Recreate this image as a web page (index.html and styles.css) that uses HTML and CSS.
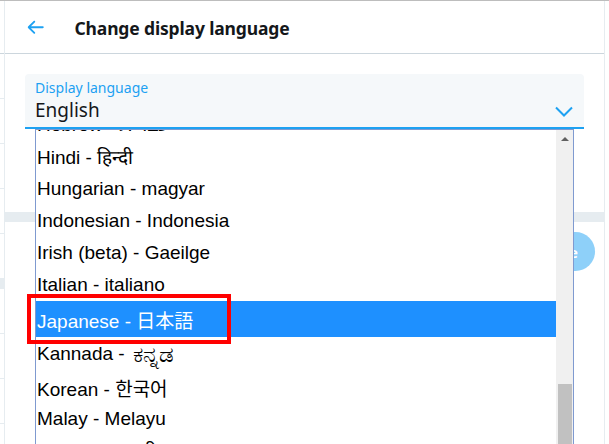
FILE: index.html
```html
<!DOCTYPE html>
<html lang="en">
<head>
<meta charset="utf-8">
<title>Change display language</title>
<link rel="stylesheet" href="styles.css">
</head>
<body>
<div class="screen">
  <aside class="side-left">
    <div class="side-row side-row-first"></div>
    <div class="side-row"></div>
    <div class="side-row"></div>
    <div class="side-row"></div>
    <div class="side-row"></div>
    <div class="side-row"></div>
    <div class="side-band"></div>
    <div class="side-row"></div>
    <div class="side-row"></div>
    <div class="side-row"></div>
  </aside>

  <main class="main">
    <header class="header">
      <svg class="back" viewBox="0 0 24 24" aria-hidden="true"><path d="M20 11H7.414l4.293-4.293c.39-.39.39-1.023 0-1.414s-1.023-.39-1.414 0l-6 6c-.39.39-.39 1.023 0 1.414l6 6c.195.195.45.293.707.293s.512-.098.707-.293c.39-.39.39-1.023 0-1.414L7.414 13H20c.553 0 1-.447 1-1s-.447-1-1-1z"/></svg>
      <h1 class="title">Change display language</h1>
    </header>

    <section class="content">
      <div class="field">
        <div class="field-text">
          <div class="field-label">Display language</div>
          <div class="field-value">English</div>
        </div>
        <svg class="chevron" viewBox="0 0 18 11" aria-hidden="true"><polyline points="1,1.5 9,9.5 17,1.5"/></svg>
      </div>
    </section>

    <div class="band"></div>

    <div class="actions">
      <button class="save" type="button">Save</button>
    </div>
  </main>

  <aside class="side-right"></aside>

  <div class="dropdown">
    <div class="options">
      <div class="options-inner">
        <div class="opt">Hebrew - עברית</div>
        <div class="opt">Hindi - हिन्दी</div>
        <div class="opt">Hungarian - magyar</div>
        <div class="opt">Indonesian - Indonesia</div>
        <div class="opt">Irish (beta) - Gaeilge</div>
        <div class="opt">Italian - italiano</div>
        <div class="opt opt-selected">Japanese - 日本語</div>
        <div class="opt opt-tall">Kannada -&nbsp;<span class="script-kn">ಕನ್ನಡ</span></div>
        <div class="opt">Korean - 한국어</div>
        <div class="opt">Malay - Melayu</div>
        <div class="opt">Marathi - मराठी</div>
      </div>
    </div>
    <div class="scrollbar">
      <div class="scroll-up"><span class="tri"></span></div>
      <div class="scroll-track"></div>
      <div class="scroll-thumb"></div>
    </div>
  </div>

  <div class="callout"></div>
</div>
</body>
</html>
```

FILE: styles.css
```css
* { box-sizing: border-box; }

html, body {
  margin: 0;
  padding: 0;
  width: 609px;
  height: 444px;
  overflow: hidden;
  background: #ffffff;
}

.screen {
  position: relative;
  display: flex;
  width: 609px;
  height: 444px;
  border-top: 1px solid #bdbdbd;
  font-family: "Noto Sans", "Liberation Sans", sans-serif;
}

/* left partial column */
.side-left {
  width: 5px;
  flex: none;
  border-right: 1px solid #e6ecf0;
  display: flex;
  flex-direction: column;
}
.side-row {
  height: 45px;
  flex: none;
  border-bottom: 1px solid #e6ecf0;
}
.side-row-first { height: 53px; border-bottom-color: #ccd6dd; }
.side-band { height: 10px; flex: none; background: #e6ecf0; }

.side-right {
  width: 5px;
  flex: none;
  border-left: 1px solid #e6ecf0;
}

/* main column */
.main {
  flex: 1;
  display: flex;
  flex-direction: column;
  min-width: 0;
}

.header {
  height: 53px;
  flex: none;
  display: flex;
  align-items: center;
  padding-left: 19px;
  border-bottom: 1px solid #ccd6dd;
}
.back {
  width: 22.5px;
  height: 22.5px;
  fill: #1da1f2;
  flex: none;
}
.title {
  margin: 2px 0 0 28px;
  font-size: 17.5px;
  letter-spacing: -0.15px;
  font-weight: 700;
  color: #14171a;
  line-height: 24px;
}

.content {
  padding: 20px 20px 0 20px;
  height: 158px;
  flex: none;
}

.field {
  height: 55px;
  display: flex;
  align-items: flex-end;
  justify-content: space-between;
  padding: 5px 11px 0 10px;
  background: #f5f8fa;
  border-radius: 4px 4px 0 0;
  border-bottom: 2px solid #1da1f2;
}
.field-text {
  align-self: stretch;
  display: flex;
  flex-direction: column;
}
.field-label {
  font-size: 14px;
  line-height: 18px;
  color: #1da1f2;
}
.field-value {
  font-size: 19px;
  line-height: 26px;
  color: #14171a;
}
.chevron {
  width: 18px;
  height: 11px;
  margin-bottom: 10px;
  fill: none;
  stroke: #1da1f2;
  stroke-width: 2;
  flex: none;
}

.band {
  height: 10px;
  flex: none;
  background: #e6ecf0;
}

.actions {
  display: flex;
  justify-content: flex-end;
  padding: 10px 9px 0 0;
}
.save {
  height: 39px;
  padding: 0 17px;
  border: 0;
  border-radius: 20px;
  background: #8ed0f9;
  color: #ffffff;
  font-family: "Noto Sans", "Liberation Sans", sans-serif;
  font-size: 15px;
  font-weight: 700;
}

/* open native-looking select list, overlays the page */
.dropdown {
  position: absolute;
  left: 35px;
  top: 128px;
  width: 539px;
  height: 340px;
  display: flex;
  background: #ffffff;
  border: 1px solid #7f9ad0;
}
.options {
  flex: 1;
  overflow: hidden;
}
.options-inner {
  margin-top: -21px;
  display: flex;
  flex-direction: column;
}
.opt {
  height: 32px;
  flex: none;
  display: flex;
  align-items: center;
  padding-left: 1px;
  font-family: "Liberation Sans", "Noto Sans CJK JP", "DejaVu Sans", sans-serif;
  font-size: 19px;
  color: #000000;
  white-space: nowrap;
}
.opt-selected {
  height: 36px;
  background: #1e90ff;
  color: #ffffff;
}
.opt-tall { height: 34px; }
.script-kn {
  font-size: 23px;
  line-height: 26px;
  margin-left: 3px;
}

.scrollbar {
  width: 17px;
  flex: none;
  background: #f0f0f0;
  display: flex;
  flex-direction: column;
}
.scroll-up {
  height: 17px;
  flex: none;
  display: flex;
  align-items: center;
  justify-content: center;
}
.tri {
  width: 0;
  height: 0;
  border-left: 4px solid transparent;
  border-right: 4px solid transparent;
  border-bottom: 4px solid #606060;
}
.scroll-track {
  height: 237px;
  flex: none;
}
.scroll-thumb {
  flex: 1;
  margin: 0 1px 0 2px;
  background: #c1c1c1;
}

/* red annotation box */
.callout {
  position: absolute;
  left: 27px;
  top: 293px;
  width: 204px;
  height: 50px;
  border: 4px solid #ff0000;
}
```
